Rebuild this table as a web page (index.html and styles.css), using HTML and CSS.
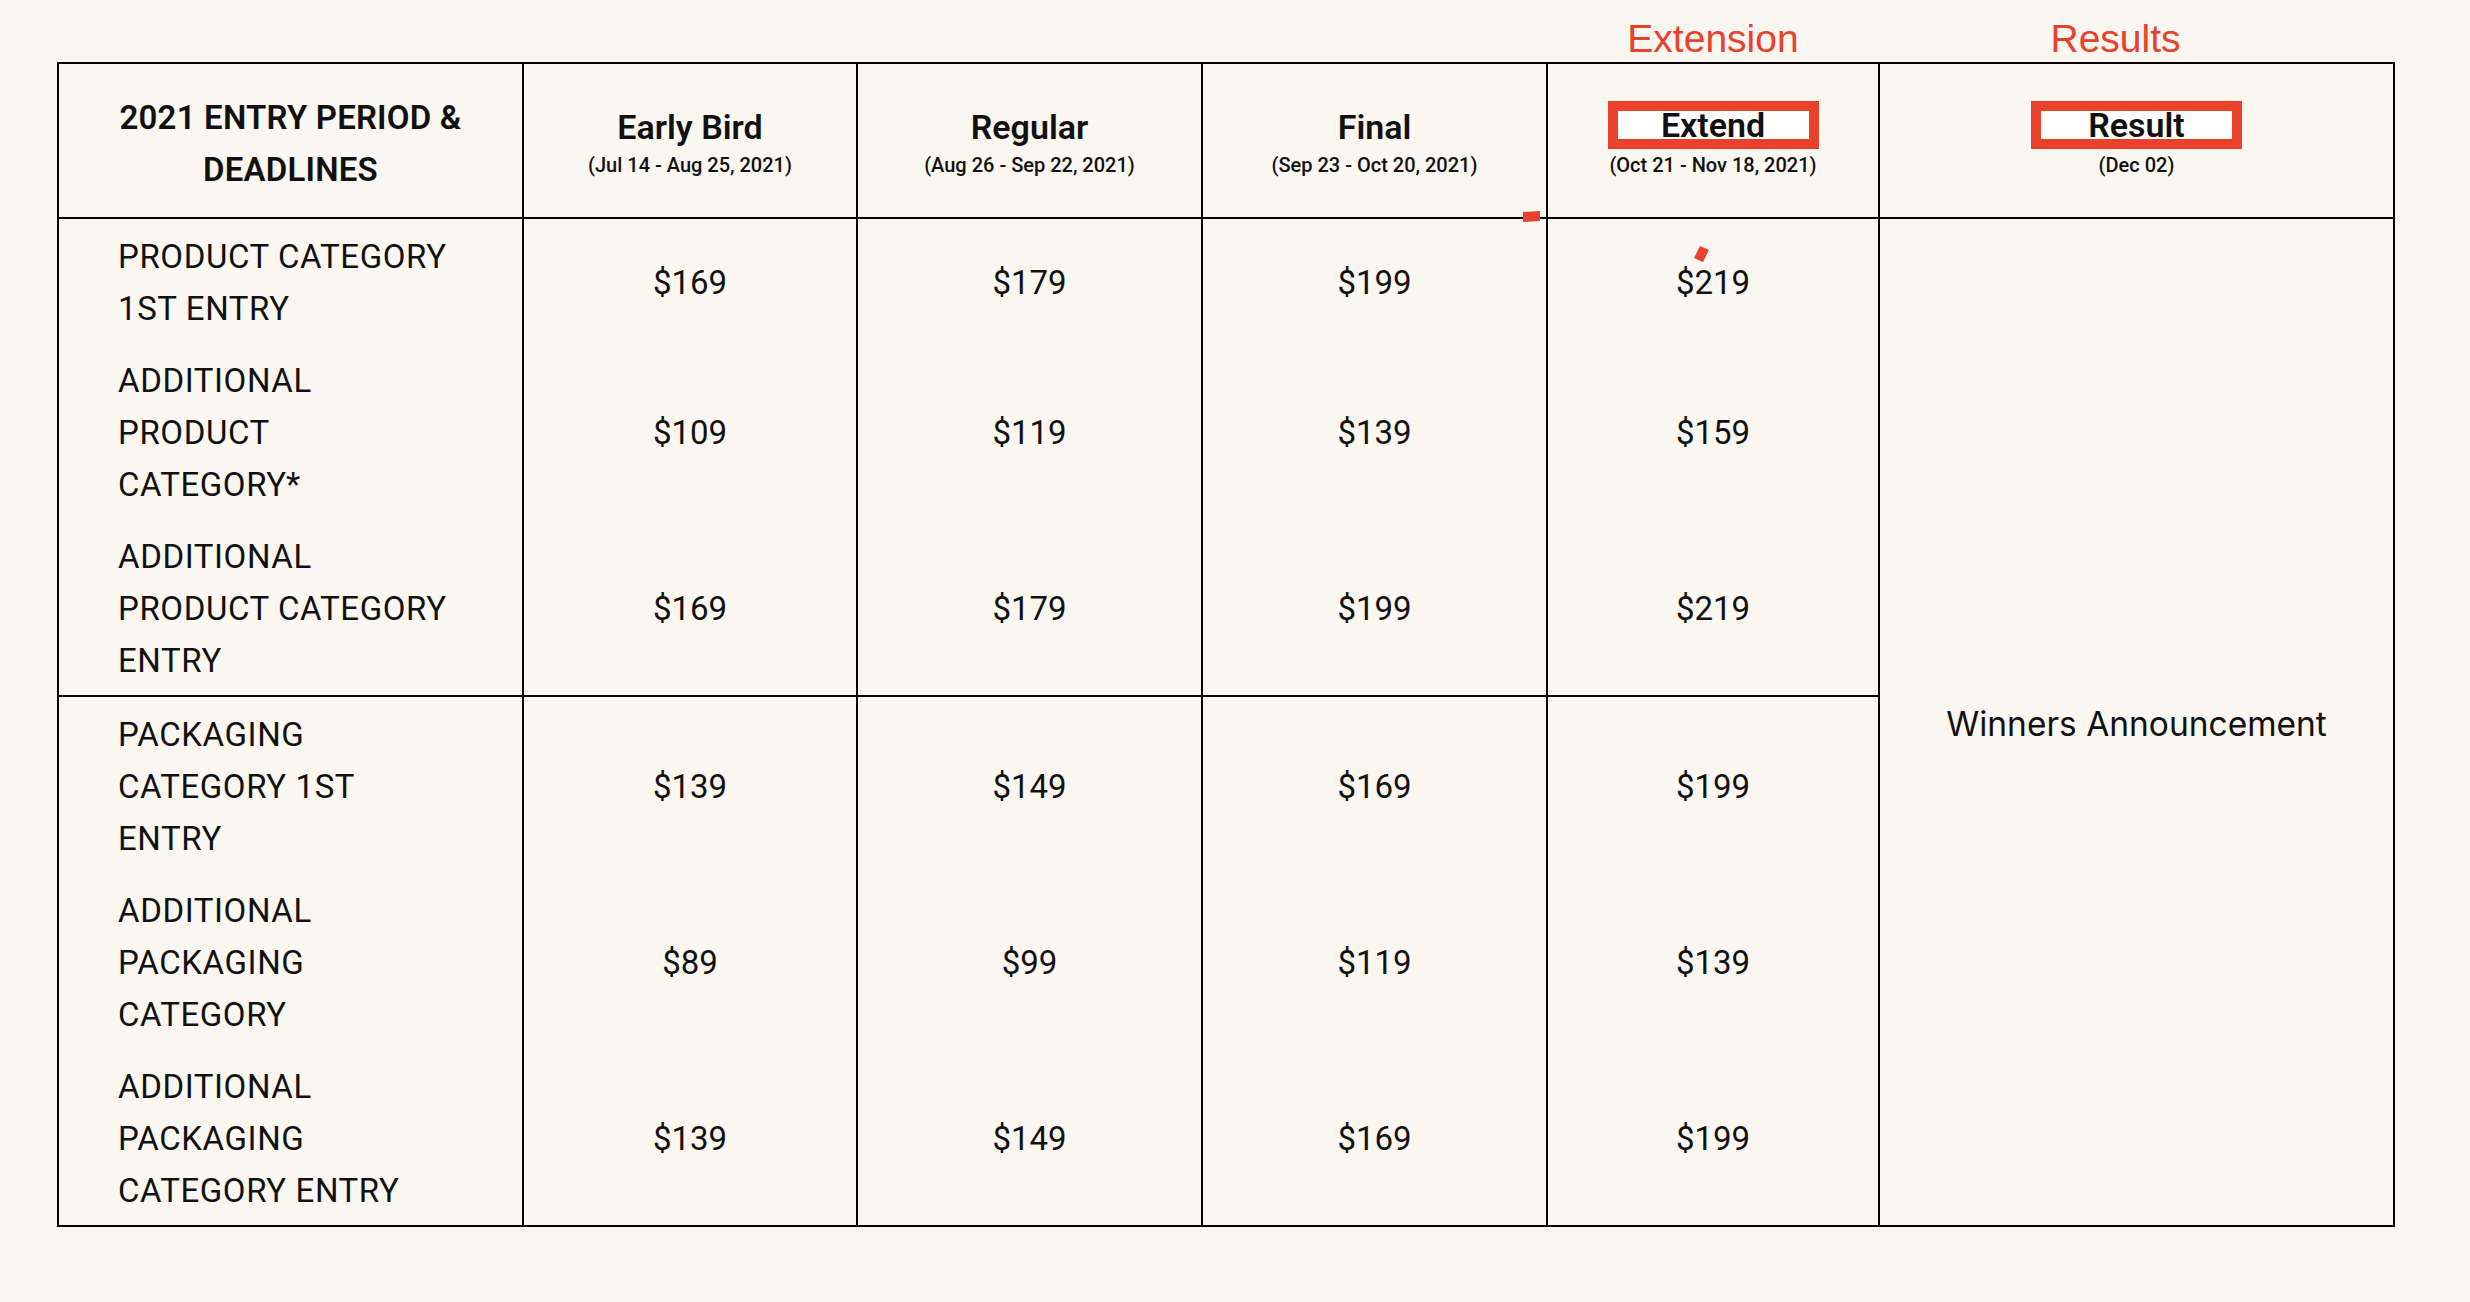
FILE: index.html
```html
<!DOCTYPE html>
<html lang="en">
<head>
<meta charset="utf-8">
<title>2021 Entry Period &amp; Deadlines</title>
<link rel="stylesheet" href="styles.css">
</head>
<body>
<div class="page">
  <div class="labels">
    <span class="lbl lbl-ext">Extension</span>
    <span class="lbl lbl-res">Results</span>
  </div>
  <table class="fees">
    <colgroup>
      <col class="c-label"><col class="c-early"><col class="c-reg"><col class="c-final"><col class="c-ext"><col class="c-res">
    </colgroup>
    <thead>
      <tr>
        <th class="h-main">2021 ENTRY PERIOD &amp;<br>DEADLINES</th>
        <th><div class="t">Early Bird</div><div class="d">(Jul 14 - Aug 25, 2021)</div></th>
        <th><div class="t">Regular</div><div class="d">(Aug 26 - Sep 22, 2021)</div></th>
        <th><div class="t">Final</div><div class="d">(Sep 23 - Oct 20, 2021)</div></th>
        <th><div class="t"><span class="boxed">Extend</span></div><div class="d">(Oct 21 - Nov 18, 2021)</div></th>
        <th><div class="t"><span class="boxed">Result</span></div><div class="d">(Dec 02)</div></th>
      </tr>
    </thead>
    <tbody>
      <tr>
        <td class="lab">PRODUCT CATEGORY<br>1ST ENTRY</td>
        <td>$169</td><td>$179</td><td>$199</td><td>$219</td>
        <td class="winners" rowspan="6">Winners Announcement</td>
      </tr>
      <tr>
        <td class="lab">ADDITIONAL<br>PRODUCT<br>CATEGORY*</td>
        <td>$109</td><td>$119</td><td>$139</td><td>$159</td>
      </tr>
      <tr class="grp-end">
        <td class="lab">ADDITIONAL<br>PRODUCT CATEGORY<br>ENTRY</td>
        <td>$169</td><td>$179</td><td>$199</td><td>$219</td>
      </tr>
      <tr>
        <td class="lab">PACKAGING<br>CATEGORY 1ST<br>ENTRY</td>
        <td>$139</td><td>$149</td><td>$169</td><td>$199</td>
      </tr>
      <tr>
        <td class="lab">ADDITIONAL<br>PACKAGING<br>CATEGORY</td>
        <td>$89</td><td>$99</td><td>$119</td><td>$139</td>
      </tr>
      <tr>
        <td class="lab">ADDITIONAL<br>PACKAGING<br>CATEGORY ENTRY</td>
        <td>$139</td><td>$149</td><td>$169</td><td>$199</td>
      </tr>
    </tbody>
  </table>
  <svg class="marks" width="2470" height="1302" viewBox="0 0 2470 1302" aria-hidden="true">
    <polygon points="1523,212 1540,211 1540,221 1523,222" fill="#E9412B"/>
    <polygon points="1700,246 1709,250 1703,262 1694,258" fill="#E9412B"/>
  </svg>
</div>
</body>
</html>
```

FILE: styles.css
```css
html, body {
  margin: 0;
  padding: 0;
  background: #FAF6F0;
}

body {
  font-family: Roboto, "Liberation Sans", sans-serif;
  color: #111;
}

.page {
  position: relative;
  width: 2470px;
  height: 1302px;
  padding-left: 57px;
  box-sizing: border-box;
}

.labels {
  display: grid;
  grid-template-columns: 466px 334px 345px 345px 332px 515px;
  width: 2338px;
  height: 62px;
  padding-top: 17px;
  box-sizing: border-box;
  font-family: "Liberation Sans", Arial, sans-serif;
  font-size: 39px;
  line-height: 44px;
  color: #E9412B;
}

.lbl-ext {
  grid-column: 5;
  justify-self: center;
}

.lbl-res {
  grid-column: 6;
  justify-self: center;
  padding-right: 42px;
}

.fees {
  border-collapse: collapse;
  table-layout: fixed;
  width: 2338px;
}

.c-label { width: 465px; }
.c-early { width: 334px; }
.c-reg { width: 345px; }
.c-final { width: 345px; }
.c-ext { width: 332px; }
.c-res { width: 515px; }

.fees th {
  border: 2px solid #000;
  height: 153px;
  padding: 0;
  text-align: center;
  vertical-align: middle;
  font-weight: 600;
}

.fees th.h-main {
  font-size: 33px;
  line-height: 52px;
  height: 147px;
  padding-top: 6px;
  letter-spacing: 0.2px;
}

.t {
  font-size: 34px;
  line-height: 49px;
  height: 49px;
}

.d {
  font-size: 20px;
  font-weight: 500;
  line-height: 26px;
}

.boxed {
  display: inline-block;
  box-sizing: border-box;
  width: 211px;
  height: 48px;
  border: 10px solid #E9412B;
  background: #fff;
  line-height: 28px;
  vertical-align: top;
  margin-top: -2px;
}

.fees td {
  border-left: 2px solid #000;
  border-right: 2px solid #000;
  padding: 12px 10px 8px;
  font-size: 33px;
  line-height: 52px;
  font-weight: 400;
  text-align: center;
  vertical-align: middle;
}

.fees td.lab {
  text-align: left;
  padding-left: 59px;
  letter-spacing: 0.6px;
}

.fees tr.grp-end td {
  border-bottom: 2px solid #000;
}

.fees tbody tr:last-child td {
  border-bottom: 2px solid #000;
}

.fees td.winners {
  border: 2px solid #000;
  font-family: Inter, Roboto, sans-serif;
  font-size: 33.5px;
}

.marks {
  position: absolute;
  left: 0;
  top: 0;
  pointer-events: none;
}
```
